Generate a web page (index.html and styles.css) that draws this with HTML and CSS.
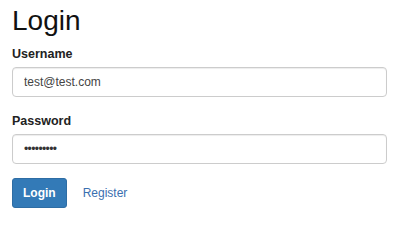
FILE: index.html
```html
<!DOCTYPE html>
<html lang="en">
<head>
<meta charset="utf-8">
<title>Login</title>
<link rel="stylesheet" href="styles.css">
</head>
<body>
<main class="container">
  <h1 class="title">Login</h1>
  <form class="login-form">
    <div class="form-group">
      <label class="form-label" for="username">Username</label>
      <input class="form-control" id="username" type="text" value="test@test.com">
    </div>
    <div class="form-group">
      <label class="form-label" for="password">Password</label>
      <input class="form-control form-control-password" id="password" type="password" value="123456789">
    </div>
    <div class="actions">
      <button class="btn-primary" type="button">Login</button>
      <a class="link" href="#">Register</a>
    </div>
  </form>
</main>
</body>
</html>
```

FILE: styles.css
```css
* { box-sizing: border-box; }

body {
  margin: 0;
  background: #ffffff;
  font-family: "Liberation Sans", Arial, sans-serif;
  color: #333333;
}

.container {
  padding: 6px 9px 0 12px;
}

.title {
  margin: 0 0 9px 0;
  font-size: 28px;
  line-height: 1.1;
  font-weight: normal;
  color: #111111;
}

.login-form {
  display: flex;
  flex-direction: column;
}

.form-group {
  display: flex;
  flex-direction: column;
  margin-bottom: 16px;
}

.form-group:nth-child(2) {
  margin-bottom: 14px;
}

.form-label {
  font-size: 12.5px;
  line-height: 17px;
  font-weight: bold;
  color: #222222;
  margin-bottom: 4px;
}

.form-control {
  width: 100%;
  height: 30px;
  margin: 0;
  padding: 0 11px;
  border: 1px solid #cccccc;
  border-radius: 4px;
  box-shadow: inset 0 1px 1px rgba(0, 0, 0, 0.075);
  font-family: "Liberation Sans", Arial, sans-serif;
  font-size: 12px;
  color: #444444;
  background: #ffffff;
  outline: none;
}

.form-control-password {
  letter-spacing: -0.6px;
  color: #333333;
}

.actions {
  display: flex;
  align-items: center;
  gap: 16px;
}

.btn-primary {
  margin: 0;
  height: 30px;
  padding: 6px 10px;
  border: 1px solid #2e6da4;
  border-radius: 3px;
  background: #337ab7;
  color: #ffffff;
  font-family: "Liberation Sans", Arial, sans-serif;
  font-size: 12px;
  line-height: 16px;
  font-weight: bold;
}

.link {
  font-size: 12px;
  color: #3a6fb0;
  text-decoration: none;
}
```
